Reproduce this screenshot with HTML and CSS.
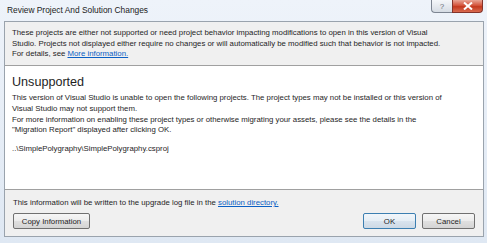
FILE: index.html
```html
<!DOCTYPE html>
<html lang="en">
<head>
    <meta charset="UTF-8">
    <title>Review Project And Solution Changes</title>
    <link rel="stylesheet" href="styles.css">
</head>
<body>
    <div class="window">
        <div class="titlebar">
            <span class="title">Review Project And Solution Changes</span>
            <div class="caption-buttons">
                <span class="cap-btn help">?</span>
                <span class="cap-btn close">
                    <svg width="12" height="8" viewBox="0 0 12 8">
                        <path d="M2 0.5 L10 7.5 M10 0.5 L2 7.5" stroke="#fff" stroke-width="2"/>
                    </svg>
                </span>
            </div>
        </div>

        <div class="dialog">
            <div class="info">
                These projects are either not supported or need project behavior impacting modifications to open in this version of Visual<br>
                Studio. Projects not displayed either require no changes or will automatically be modified such that behavior is not impacted.<br>
                For details, see <a href="#">More information.</a>
            </div>

            <div class="main">
                <h2>Unsupported</h2>
                <p>
                    This version of Visual Studio is unable to open the following projects. The project types may not be installed or this version of<br>
                    Visual Studio may not support them.<br>
                    For more information on enabling these project types or otherwise migrating your assets, please see the details in the<br>
                    "Migration Report" displayed after clicking OK.
                </p>
                <p class="project">..\SimplePolygraphy\SimplePolygraphy.csproj</p>
            </div>

            <div class="footer">
                <p>This information will be written to the upgrade log file in the <a href="#">solution directory.</a></p>
                <div class="buttons">
                    <button type="button" class="btn btn-wide">Copy Information</button>
                    <div class="right-buttons">
                        <button type="button" class="btn default">OK</button>
                        <button type="button" class="btn">Cancel</button>
                    </div>
                </div>
            </div>
        </div>
    </div>
</body>
</html>
```

FILE: styles.css
```css
* {
    margin: 0;
    padding: 0;
    box-sizing: border-box;
}

body {
    font-family: 'Liberation Sans', Arial, sans-serif;
    font-size: 7.8px;
    color: #1e1e1e;
    background: #e4edf7;
}

a {
    color: #0a5fc4;
}

/* window frame */
.window {
    width: 487px;
    height: 243px;
    padding: 0 3px 6px 4px;
    display: flex;
    flex-direction: column;
    background: linear-gradient(180deg, #eef3fa, #dfe8f3);
}

.titlebar {
    height: 21px;
    display: flex;
    justify-content: space-between;
    align-items: flex-start;
}

.title {
    font-size: 8.4px;
    padding: 5px 0 0 3px;
    color: #1b1b1b;
}

.caption-buttons {
    display: flex;
    margin-right: 1px;
}

.cap-btn {
    height: 13px;
    display: flex;
    align-items: center;
    justify-content: center;
    border: 1px solid #7d8592;
    border-top: none;
}

.help {
    width: 21px;
    border-radius: 0 0 0 4px;
    border-right: none;
    background: linear-gradient(180deg, #f5f7fa, #d6dce4);
    color: #6a6f78;
    font-size: 8px;
}

.close {
    width: 31px;
    border-radius: 0 0 4px 0;
    background: linear-gradient(180deg, #e8a596 0%, #d4543c 45%, #c3391f 55%, #d96b50 100%);
    border-color: #84332a;
}

/* dialog body */
.dialog {
    flex: 1;
    display: flex;
    flex-direction: column;
    border: 1px solid #9aa3ad;
    background: #f0f0f0;
}

.info {
    height: 44px;
    padding: 6px 7px 0;
    line-height: 10.6px;
    white-space: nowrap;
    border-bottom: 1px solid #a0a0a0;
}

.main {
    flex: 1;
    background: #fff;
    padding: 9px 7px 0;
    border-bottom: 1px solid #a0a0a0;
    white-space: nowrap;
}

.main h2 {
    font-weight: normal;
    font-size: 12.6px;
    line-height: 15px;
    margin-bottom: 3px;
}

.main p {
    line-height: 10.8px;
}

.main .project {
    margin-top: 8px;
}

.footer {
    height: 46px;
    padding: 8px 8px 0;
}

.buttons {
    display: flex;
    justify-content: space-between;
    margin-top: 6px;
}

.right-buttons {
    display: flex;
    gap: 6px;
}

.btn {
    font-family: inherit;
    font-size: 7.8px;
    color: #1e1e1e;
    height: 16px;
    width: 53px;
    border: 1px solid #707070;
    border-radius: 2px;
    background: linear-gradient(180deg, #f6f6f6 0%, #ececec 50%, #e0e0e0 51%, #d4d4d4 100%);
}

.btn-wide {
    width: 77px;
}

.btn.default {
    border-color: #3c7fb1;
    background: linear-gradient(180deg, #f1f6fa 0%, #e6eef5 50%, #d9e4ee 51%, #cdd9e5 100%);
}
```
